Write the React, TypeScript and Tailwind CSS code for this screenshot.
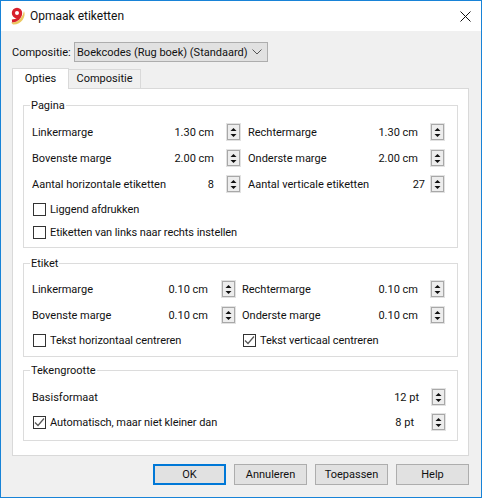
import React from "react";

const Spinner = () => (
  <div className="w-[13px] h-[16px] mx-[1px] border border-[#a8a8a8] bg-[#ededed] flex flex-col items-center justify-center gap-[3px] shrink-0 outline outline-1 outline-[#e2e2e2]">
    <svg width="7" height="3" viewBox="0 0 7 3"><path d="M3.5 0 L6.5 3 H0.5 Z" fill="#111" /></svg>
    <svg width="7" height="3" viewBox="0 0 7 3"><path d="M0.5 0 H6.5 L3.5 3 Z" fill="#111" /></svg>
  </div>
);

const Check = ({label, checked}: {label: string; checked?: boolean}) => (
  <div className="flex items-center gap-[4px] h-full pl-[1px]">
    <div className="w-[13px] h-[13px] border border-[#333] bg-white flex items-center justify-center shrink-0">
      {checked && (
        <svg width="11" height="11" viewBox="0 0 11 11" fill="none">
          <path d="M1 5.5 L4 8.5 L10 1.5" stroke="#555" strokeWidth="1.2" />
        </svg>
      )}
    </div>
    <span className="whitespace-nowrap pt-[2px] tracking-[-0.07px]">{label}</span>
  </div>
);

const Field = ({label, value, valueW, width}: {label: string; value: string; valueW: string; width: string}) => (
  <div className={`flex items-center h-[26px] ${width}`}>
    <span className="flex-1 whitespace-nowrap pt-[2px]">{label}</span>
    <span className={`whitespace-nowrap text-right pt-[2px] ${valueW}`}>{value}</span>
    <Spinner />
  </div>
);

const Group = ({title, className, children}: {title: string; className: string; children: React.ReactNode}) => (
  <fieldset className={`border border-[#dcdcdc] mx-[10px] pl-[8px] pr-[11px] ${className}`}>
    <legend className="-ml-[2px] px-[1px] h-[16px] leading-[18px]">{title}</legend>
    {children}
  </fieldset>
);

const App = () => {
  return (
    <div
      className="w-[482px] h-[498px] border border-[#1883d7] bg-[#f0f0f0] text-[11px] text-[#111] flex flex-col overflow-hidden"
      style={{fontFamily: 'Roboto, sans-serif'}}
    >
      {/* title bar */}
      <div className="h-[30px] bg-white flex items-center shrink-0 pl-[8px] pr-[10px]">
        <svg width="18" height="18" viewBox="0 0 18 18" fill="none">
          <path d="M2 15.5 C8 16 13 12 15 4 C17.5 10 12 18 4 17.5 Z" fill="#ecc860" />
          <circle cx="8" cy="6" r="3.6" stroke="#d81f2c" strokeWidth="3.2" />
          <path d="M11.6 6.5 C11.4 10.5 8 13.5 3 14" stroke="#d81f2c" strokeWidth="3" />
        </svg>
        <span className="ml-[3px] flex-1 text-[12px]">Opmaak etiketten</span>
        <svg width="11" height="11" viewBox="0 0 11 11" fill="none">
          <path d="M0.5 0.5 L10.5 10.5 M10.5 0.5 L0.5 10.5" stroke="#111" />
        </svg>
      </div>

      {/* body */}
      <div className="flex-1 flex flex-col px-[11px]">
        <div className="flex items-center h-[20px] mt-[11px]">
          <span className="w-[62px] whitespace-nowrap pt-[2px]">Compositie:</span>
          <div className="w-[194px] h-[20px] border border-[#adadad] bg-[#e1e1e1] flex items-center justify-between pl-[2px] pr-[5px]">
            <span className="whitespace-nowrap pt-[2px]">Boekcodes (Rug boek) (Standaard)</span>
            <svg width="10" height="6" viewBox="0 0 10 6" fill="none">
              <path d="M0.5 0.5 L5 5 L9.5 0.5" stroke="#555" />
            </svg>
          </div>
        </div>

        {/* tabs */}
        <div className="flex items-end h-[20px] mt-[6px] relative z-10">
          <div className="w-[57px] h-[21px] -mb-[1px] bg-white border border-b-0 border-[#d9d9d9] flex items-center justify-center">Opties</div>
          <div className="w-[72px] h-[19px] bg-[#f0f0f0] border border-l-0 border-b-0 border-[#d9d9d9] flex items-center justify-center">Compositie</div>
        </div>

        {/* tab pane */}
        <div className="w-[457px] h-[368px] bg-white border border-[#d9d9d9] pt-[8px]">
          <Group title="Pagina" className="h-[151px]">
            <div className="pt-[6px] flex flex-col">
              <div className="flex gap-[7px]">
                <Field label="Linkermarge" value="1.30 cm" valueW="mr-[12px]" width="w-[209px]" />
                <Field label="Rechtermarge" value="1.30 cm" valueW="mr-[12px]" width="w-[197px]" />
              </div>
              <div className="flex gap-[7px]">
                <Field label="Bovenste marge" value="2.00 cm" valueW="mr-[12px]" width="w-[209px]" />
                <Field label="Onderste marge" value="2.00 cm" valueW="mr-[12px]" width="w-[197px]" />
              </div>
              <div className="flex gap-[7px]">
                <Field label="Aantal horizontale etiketten" value="8" valueW="mr-[12px]" width="w-[209px]" />
                <Field label="Aantal verticale etiketten" value="27" valueW="mr-[5px]" width="w-[197px]" />
              </div>
              <div className="h-[24px]"><Check label="Liggend afdrukken" /></div>
              <div className="h-[23px]"><Check label="Etiketten van links naar rechts instellen" /></div>
            </div>
          </Group>

          <Group title="Etiket" className="h-[102px] mt-[7px]">
            <div className="pt-[5px] flex flex-col">
              <div className="flex gap-[6px]">
                <Field label="Linkermarge" value="0.10 cm" valueW="mr-[13px]" width="w-[204px]" />
                <Field label="Rechtermarge" value="0.10 cm" valueW="mr-[12px]" width="w-[203px]" />
              </div>
              <div className="flex gap-[6px]">
                <Field label="Bovenste marge" value="0.10 cm" valueW="mr-[13px]" width="w-[204px]" />
                <Field label="Onderste marge" value="0.10 cm" valueW="mr-[12px]" width="w-[203px]" />
              </div>
              <div className="flex h-[24px]">
                <div className="w-[210px]"><Check label="Tekst horizontaal centreren" /></div>
                <Check label="Tekst verticaal centreren" checked />
              </div>
            </div>
          </Group>

          <Group title="Tekengrootte" className="h-[79px] mt-[5px]">
            <div className="pt-[6px] flex flex-col">
              <Field label="Basisformaat" value="12 pt" valueW="mr-[12px]" width="w-full" />
              <div className="flex items-center h-[24px]">
                <div className="flex-1"><Check label="Automatisch, maar niet kleiner dan" checked /></div>
                <span className="mr-[17px] pt-[2px]">8 pt</span>
                <Spinner />
              </div>
            </div>
          </Group>
        </div>

        {/* buttons */}
        <div className="flex justify-end gap-[8px] mt-[8px] mr-[1px]">
          <button className="w-[73px] h-[21px] pt-[1px] bg-[#e1e1e1] border-2 border-[#0078d7]">OK</button>
          <button className="w-[73px] h-[21px] pt-[1px] bg-[#e1e1e1] border border-[#adadad]">Annuleren</button>
          <button className="w-[73px] h-[21px] pt-[1px] bg-[#e1e1e1] border border-[#adadad]">Toepassen</button>
          <button className="w-[73px] h-[21px] pt-[1px] bg-[#e1e1e1] border border-[#adadad]">Help</button>
        </div>
      </div>
    </div>
  );
};

export default App;
